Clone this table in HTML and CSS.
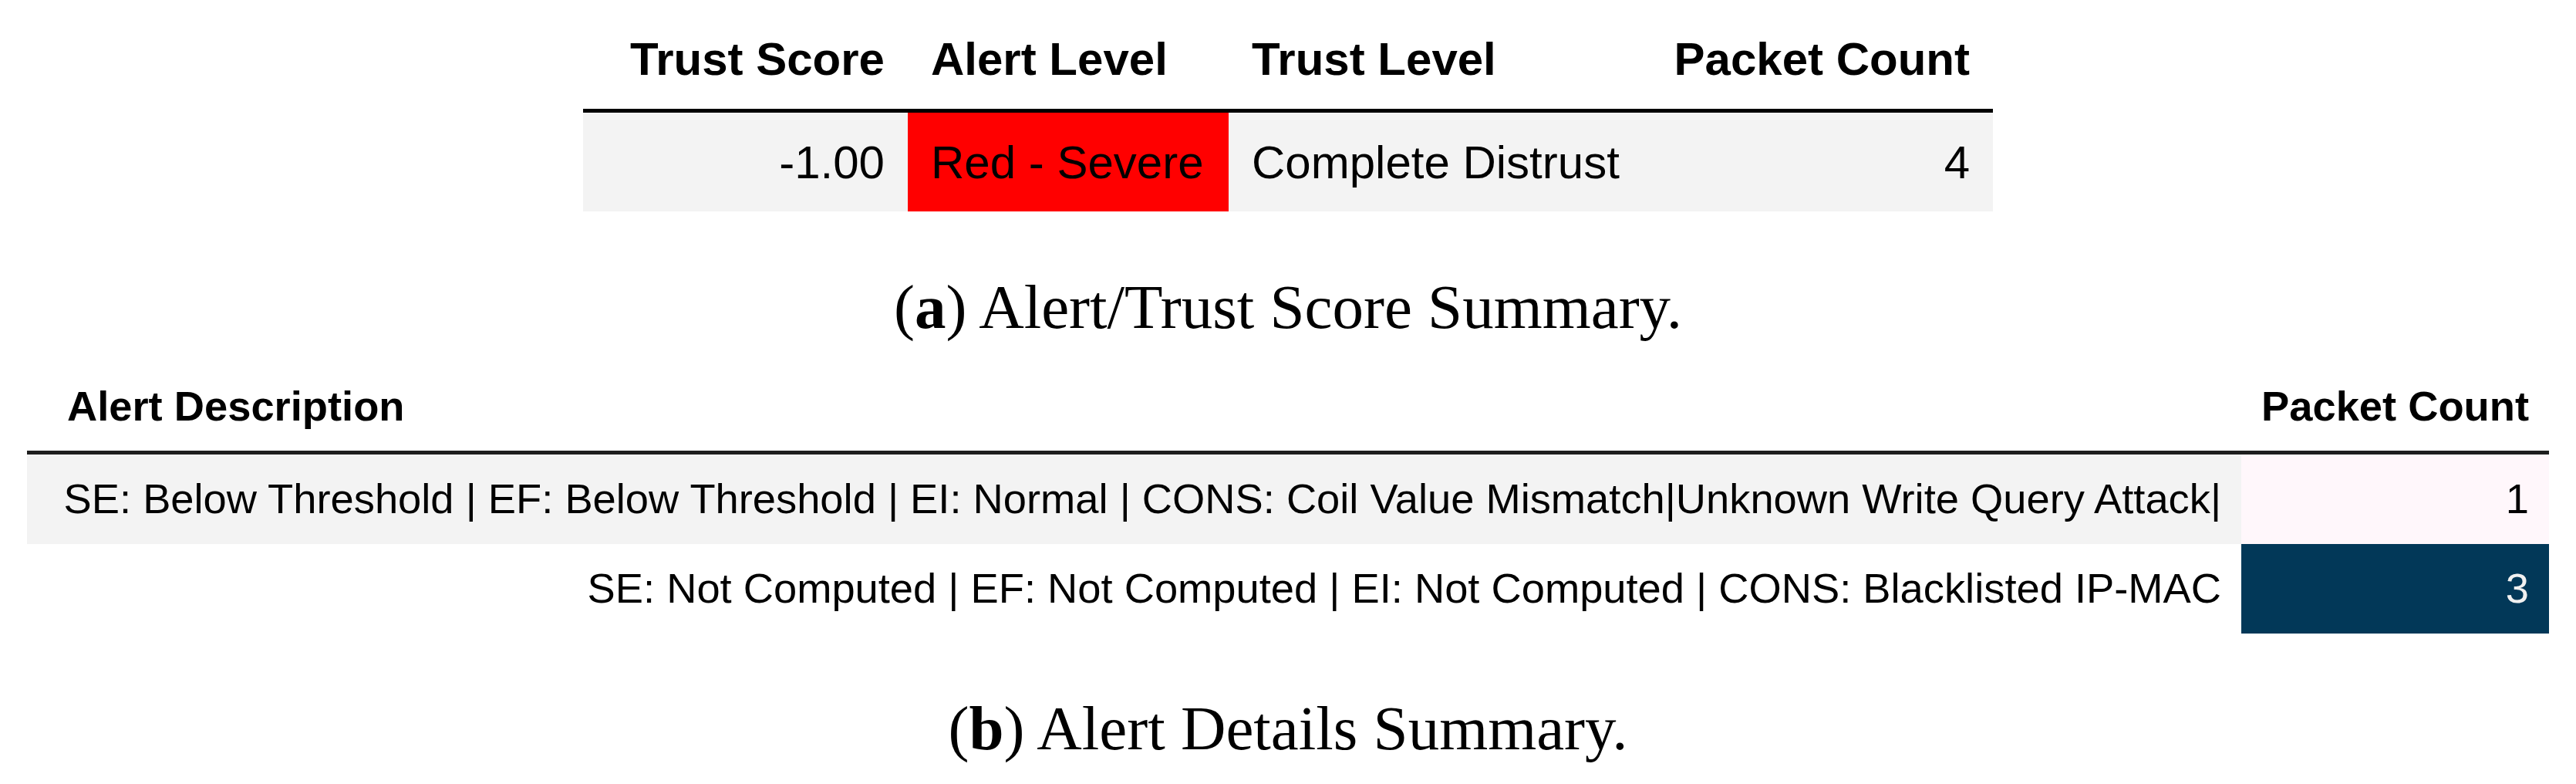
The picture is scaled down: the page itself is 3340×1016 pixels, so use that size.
FILE: index.html
```html
<!DOCTYPE html>
<html lang="en">
<head>
<meta charset="utf-8">
<title>Alert Summaries</title>
<link rel="stylesheet" href="styles.css">
</head>
<body>
<div class="page">
  <figure class="sub">
    <table class="tbl tbl-a">
      <colgroup>
        <col class="a-score"><col class="a-alert"><col class="a-trust"><col class="a-count">
      </colgroup>
      <thead>
        <tr>
          <th class="num">Trust Score</th>
          <th>Alert Level</th>
          <th>Trust Level</th>
          <th class="num">Packet Count</th>
        </tr>
      </thead>
      <tbody>
        <tr class="striped">
          <td class="num">-1.00</td>
          <td class="red">Red - Severe</td>
          <td>Complete Distrust</td>
          <td class="num">4</td>
        </tr>
      </tbody>
    </table>
    <figcaption class="cap cap-a">(<b>a</b>) Alert/Trust Score Summary.</figcaption>
  </figure>

  <figure class="sub">
    <table class="tbl tbl-b">
      <colgroup>
        <col class="b-desc"><col class="b-count">
      </colgroup>
      <thead>
        <tr>
          <th class="desc-head">Alert Description</th>
          <th class="num">Packet Count</th>
        </tr>
      </thead>
      <tbody>
        <tr class="striped">
          <td>SE: Below Threshold | EF: Below Threshold | EI: Normal | CONS: Coil Value Mismatch|Unknown Write Query Attack|</td>
          <td class="low">1</td>
        </tr>
        <tr>
          <td>SE: Not Computed | EF: Not Computed | EI: Not Computed | CONS: Blacklisted IP-MAC</td>
          <td class="high">3</td>
        </tr>
      </tbody>
    </table>
    <figcaption class="cap cap-b">(<b>b</b>) Alert Details Summary.</figcaption>
  </figure>
</div>
</body>
</html>
```

FILE: styles.css
```css
html, body {
  margin: 0;
  padding: 0;
  background: #ffffff;
}

body {
  font-family: "Liberation Sans", Arial, sans-serif;
  color: #000000;
}

.page {
  width: 3340px;
}

.sub {
  margin: 0;
  padding: 0;
}

.tbl {
  border-collapse: separate;
  border-spacing: 0;
  table-layout: fixed;
  margin: 0 auto;
}

.tbl th {
  font-weight: bold;
  text-align: left;
  white-space: nowrap;
}

.tbl td {
  white-space: nowrap;
}

.tbl .num {
  text-align: right;
}

.striped td {
  background: #f3f3f3;
}

/* ---------- table (a) ---------- */
.tbl-a {
  width: 1828px;
  font-size: 60px;
  line-height: 67px;
}

.a-score { width: 421px; }
.a-alert { width: 416px; }
.a-trust { width: 546px; }
.a-count { width: 445px; }

.tbl-a th {
  padding: 43px 30px 31px;
  border-bottom: 5px solid #000000;
}

.tbl-a td {
  padding: 31px 30px 30px;
}

.tbl-a .striped td.red {
  background: #ff0000;
  color: #000000;
}

/* ---------- table (b) ---------- */
.tbl-b {
  width: 3270px;
  margin-top: 28px;
  font-size: 54.3px;
  line-height: 60px;
}

.b-desc { width: 2871px; }
.b-count { width: 399px; }

.tbl-b th {
  padding: 27px 26px 27px;
  border-bottom: 5px solid #1e1e1e;
}

.tbl-b th.desc-head {
  padding-left: 52px;
}

.tbl-b td {
  padding: 28px 26px;
  text-align: right;
}

.tbl-b .striped td.low {
  background: #fff7fb;
  color: #000000;
}

.tbl-b td.high {
  background: #023858;
  color: #f1f1f1;
}

/* ---------- captions ---------- */
.cap {
  font-family: "Liberation Serif", "Times New Roman", serif;
  font-size: 81px;
  line-height: 88px;
  text-align: center;
  color: #000000;
}

.cap b {
  font-weight: bold;
}

.cap-a {
  margin-top: 80px;
}

.cap-b {
  margin-top: 79px;
}
```
